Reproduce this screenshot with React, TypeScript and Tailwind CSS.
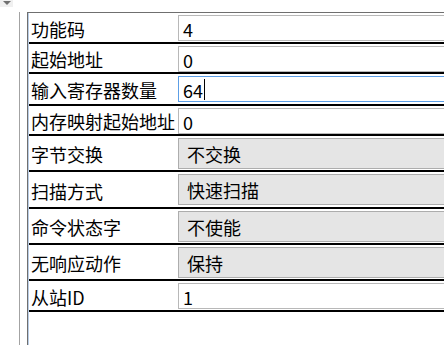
import React from "react";

type Row = {
  label: string;
  value: string;
  kind: "input" | "select" | "focus";
  h: string;
};

const rows: Row[] = [
  { label: "功能码", value: "4", kind: "input", h: "h-[31px]" },
  { label: "起始地址", value: "0", kind: "input", h: "h-[30px]" },
  { label: "输入寄存器数量", value: "64", kind: "focus", h: "h-[32px]" },
  { label: "内存映射起始地址", value: "0", kind: "input", h: "h-[30px]" },
  { label: "字节交换", value: "不交换", kind: "select", h: "h-[36px]" },
  { label: "扫描方式", value: "快速扫描", kind: "select", h: "h-[37px]" },
  { label: "命令状态字", value: "不使能", kind: "select", h: "h-[36px]" },
  { label: "无响应动作", value: "保持", kind: "select", h: "h-[36px]" },
  { label: "从站ID", value: "1", kind: "input", h: "h-[31px]" },
];

function Control({ row }: { row: Row }) {
  if (row.kind === "select") {
    return (
      <div className="mt-[2px] h-[31px] w-[300px] shrink-0 border border-[#adadad] bg-[#e5e5e5] pl-[8px] flex items-center">
        <span className="leading-none pt-[1px]">{row.value}</span>
      </div>
    );
  }
  const border = row.kind === "focus" ? "border-[#5c9ee6]" : "border-[#b8b8b8]";
  return (
    <div
      className={`mt-[2px] h-[26px] w-[300px] shrink-0 border ${border} bg-white pl-[4px] flex items-center`}
    >
      <span className="leading-none pt-[1px]">{row.value}</span>
      {row.kind === "focus" && <span className="ml-[1px] inline-block w-px h-[21px] bg-black" />}
    </div>
  );
}

export default function App() {
  return (
    <div
      className="w-[444px] h-[345px] overflow-hidden bg-white flex flex-col text-black text-[18px]"
      style={{ fontFamily: '"Noto Sans CJK SC", "Noto Sans", sans-serif' }}
    >
      <div className="h-[12px] shrink-0 flex items-start">
        <div className="w-[13px] h-[7px] bg-[#f0f0f0] flex justify-center items-start pt-[1px]">
          <svg width="8" height="4" viewBox="0 0 8 4">
            <polygon points="0,0 8,0 4,4" fill="#707070" />
          </svg>
        </div>
      </div>
      <div className="flex flex-1 min-h-0">
        <div className="w-[19px] shrink-0" />
        <div className="w-px shrink-0 bg-[#a3a3a3]" />
        <div className="w-[7px] shrink-0" />
        <div className="flex-1 min-w-0 flex border-l border-t border-[#6f6f6f]">
          <div className="w-px shrink-0 bg-[#b9cde6]" />
          <div className="flex-1 min-w-0 flex flex-col">
            {rows.map((r) => (
              <div key={r.label} className={`${r.h} shrink-0 flex border-b-2 border-black`}>
                <div className="w-[149px] shrink-0 pl-[2px] flex items-center pt-[2px] whitespace-nowrap leading-none">
                  {r.label}
                </div>
                <Control row={r} />
              </div>
            ))}
          </div>
        </div>
      </div>
    </div>
  );
}
